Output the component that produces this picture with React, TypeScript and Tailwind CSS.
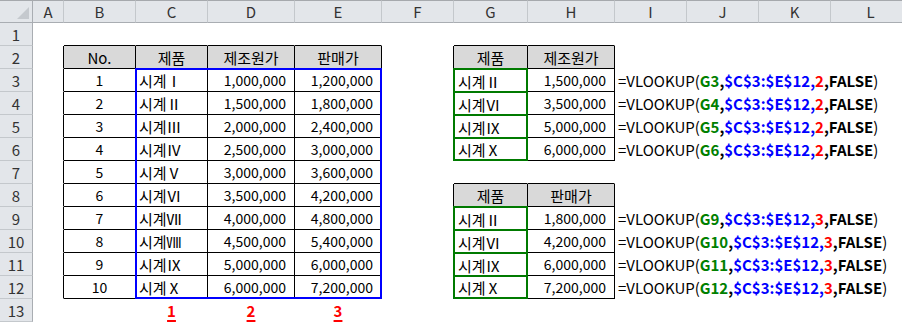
import React from "react";

const COL_START = [
  "col-start-1", "col-start-2", "col-start-3", "col-start-4", "col-start-5", "col-start-6", "col-start-7",
  "col-start-8", "col-start-9", "col-start-10", "col-start-11", "col-start-12", "col-start-13",
];
const ROW_START = [
  "row-start-1", "row-start-2", "row-start-3", "row-start-4", "row-start-5", "row-start-6", "row-start-7",
  "row-start-8", "row-start-9", "row-start-10", "row-start-11", "row-start-12", "row-start-13", "row-start-14",
];

const LETTERS = ["A", "B", "C", "D", "E", "F", "G", "H", "I", "J", "K", "L"];

const T1 = [
  ["1", "시계Ⅰ", "1,000,000", "1,200,000"],
  ["2", "시계Ⅱ", "1,500,000", "1,800,000"],
  ["3", "시계Ⅲ", "2,000,000", "2,400,000"],
  ["4", "시계Ⅳ", "2,500,000", "3,000,000"],
  ["5", "시계Ⅴ", "3,000,000", "3,600,000"],
  ["6", "시계Ⅵ", "3,500,000", "4,200,000"],
  ["7", "시계Ⅶ", "4,000,000", "4,800,000"],
  ["8", "시계Ⅷ", "4,500,000", "5,400,000"],
  ["9", "시계Ⅸ", "5,000,000", "6,000,000"],
  ["10", "시계Ⅹ", "6,000,000", "7,200,000"],
];

const T2 = [
  ["시계Ⅱ", "1,500,000", "G3"],
  ["시계Ⅵ", "3,500,000", "G4"],
  ["시계Ⅸ", "5,000,000", "G5"],
  ["시계Ⅹ", "6,000,000", "G6"],
];
const T3 = [
  ["시계Ⅱ", "1,800,000", "G9"],
  ["시계Ⅵ", "4,200,000", "G10"],
  ["시계Ⅸ", "6,000,000", "G11"],
  ["시계Ⅹ", "7,200,000", "G12"],
];

type Kind = "center" | "num" | "left" | "right" | "formula" | "label";
type Content = { node: React.ReactNode; kind: Kind };

function inTable(r: number, c: number) {
  if (c >= 2 && c <= 5 && r >= 2 && r <= 12) return true;
  if (c >= 7 && c <= 8 && r >= 2 && r <= 6) return true;
  if (c >= 7 && c <= 8 && r >= 8 && r <= 12) return true;
  return false;
}

function isHeaderCell(r: number, c: number) {
  if (r === 2 && c >= 2 && c <= 5) return true;
  if ((r === 2 || r === 8) && (c === 7 || c === 8)) return true;
  return false;
}

function Formula({ g, n }: { g: string; n: string }) {
  return (
    <span>
      =VLOOKUP(
      <span className="font-bold text-[#008000]">{g}</span>
      <span className="font-bold">,</span>
      <span className="font-bold text-[#0000ff]">$C$3:$E$12,</span>
      <span className="font-bold text-[#ff0000]">{n}</span>
      <span className="font-bold">,FALSE</span>)
    </span>
  );
}

function getContent(r: number, c: number): Content | null {
  if (r === 2 && c >= 2 && c <= 5) return { node: ["No.", "제품", "제조원가", "판매가"][c - 2], kind: "center" };
  if (r >= 3 && r <= 12 && c >= 2 && c <= 5) {
    const row = T1[r - 3];
    if (c === 2) return { node: row[0], kind: "num" };
    if (c === 3) return { node: row[1], kind: "left" };
    return { node: row[c - 2], kind: "right" };
  }
  if (r === 13 && c >= 3 && c <= 5) return { node: String(c - 2), kind: "label" };
  if (r === 2 && c === 7) return { node: "제품", kind: "center" };
  if (r === 2 && c === 8) return { node: "제조원가", kind: "center" };
  if (r === 8 && c === 7) return { node: "제품", kind: "center" };
  if (r === 8 && c === 8) return { node: "판매가", kind: "center" };
  if (r >= 3 && r <= 6) {
    const row = T2[r - 3];
    if (c === 7) return { node: row[0], kind: "left" };
    if (c === 8) return { node: row[1], kind: "right" };
    if (c === 9) return { node: <Formula g={row[2]} n="2" />, kind: "formula" };
  }
  if (r >= 9 && r <= 12) {
    const row = T3[r - 9];
    if (c === 7) return { node: row[0], kind: "left" };
    if (c === 8) return { node: row[1], kind: "right" };
    if (c === 9) return { node: <Formula g={row[2]} n="3" />, kind: "formula" };
  }
  return null;
}

const KIND_CLASS: Record<Kind, string> = {
  center: "justify-center text-black text-[15px]",
  num: "justify-center text-black text-[14px]",
  left: "justify-start pl-[3px] text-black text-[15px]",
  right: "justify-end pr-[8px] text-black text-[14px]",
  formula: "justify-start pl-[3px] whitespace-nowrap overflow-visible text-black text-[15px]",
  label: "justify-center font-bold text-[15px] text-[#ff0000] underline decoration-2 underline-offset-[3px]",
};

export default function App() {
  const cells: React.ReactNode[] = [];

  cells.push(
    <div
      key="corner"
      className="col-start-1 row-start-1 relative bg-[#e3e6ea] border-t border-t-[#a6a9ad] border-r border-b border-r-[#a9adb2] border-b-[#a9adb2]"
    >
      <svg className="absolute right-[3px] bottom-[3px]" width="12" height="12" viewBox="0 0 12 12">
        <polygon points="12,0 12,12 0,12" fill="#c5c9ce" />
      </svg>
    </div>
  );

  LETTERS.forEach((l, i) => {
    cells.push(
      <div
        key={"h" + l}
        className={
          COL_START[i + 1] +
          " row-start-1 flex items-center justify-center bg-[#e3e6ea] text-[#333] text-[15px] border-t border-t-[#a6a9ad] border-b border-b-[#a9adb2] border-r border-r-[#c4c8cc]"
        }
      >
        {l}
      </div>
    );
  });

  for (let r = 1; r <= 13; r++) {
    cells.push(
      <div
        key={"r" + r}
        className={
          "col-start-1 " +
          ROW_START[r] +
          " flex items-center justify-center bg-[#e3e6ea] text-[#333] text-[15px] border-r border-r-[#a9adb2] border-b border-b-[#c4c8cc]"
        }
      >
        {r}
      </div>
    );
    for (let c = 1; c <= 12; c++) {
      const content = getContent(r, c);
      const rightBlack = inTable(r, c) || inTable(r, c + 1);
      const bottomBlack = inTable(r, c) || inTable(r + 1, c);
      const isGreen = c === 7 && ((r >= 3 && r <= 6) || (r >= 9 && r <= 12));
      const lastGreen = r === 6 || r === 12;
      let cls = COL_START[c] + " " + ROW_START[r] + " flex items-center min-w-0";
      if (isGreen) {
        cls +=
          " -ml-px -mt-px border-l-2 border-r-2 border-t-2 border-[#007a00] " + (lastGreen ? "border-b-2" : "border-b-0");
      } else {
        cls += " border-r border-b";
        cls += rightBlack ? " border-r-black" : " border-r-transparent";
        cls += bottomBlack ? " border-b-black" : " border-b-transparent";
      }
      if (isHeaderCell(r, c)) cls += " bg-[#d9d9d9]";
      if (content) cls += " " + KIND_CLASS[content.kind];
      cells.push(
        <div key={r + "-" + c} className={cls}>
          {content ? content.node : null}
        </div>
      );
    }
  }

  return (
    <div className="w-[902px] h-[322px] overflow-hidden bg-white font-['Noto_Sans_CJK_KR','Noto_Sans',sans-serif] leading-none">
      <div className="grid grid-cols-[33px_31px_72px_72px_87px_87px_72px_74px_87px_72px_72px_72px_80px] grid-rows-[repeat(14,23px)]">
        {cells}
        <div className="col-start-4 col-span-3 row-start-4 row-span-10 -ml-px -mt-px border-2 border-[#0000ff] relative pointer-events-none" />
      </div>
    </div>
  );
}
